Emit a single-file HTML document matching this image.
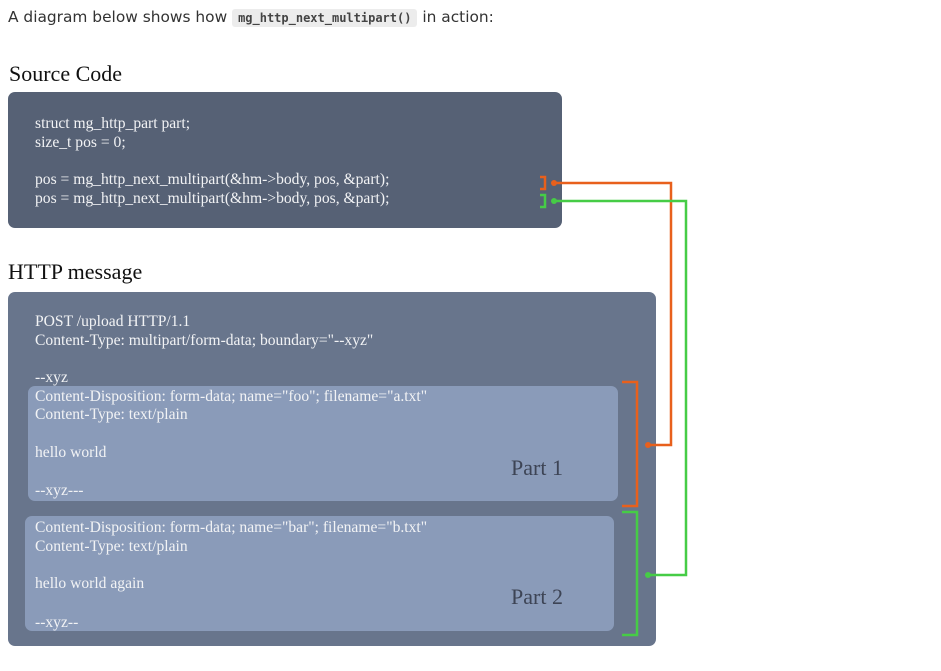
<!DOCTYPE html>
<html><head><meta charset="utf-8"><style>
body{margin:0;width:941px;height:671px;background:#fff;position:relative;overflow:hidden}
.a{position:absolute;white-space:pre}
.s{font-family:"Liberation Serif",serif;font-size:15.6px;line-height:19px;color:#f2f3f5}
.h{font-family:"Liberation Serif",serif;font-size:22px;color:#111}
.box{position:absolute;border-radius:7px}
</style></head><body>
<div class="a" style="left:8px;top:7px;font-family:'DejaVu Sans','Liberation Sans',sans-serif;font-size:15.4px;color:#333;line-height:20px">A diagram below shows how <span style="font-family:'DejaVu Sans Mono','Liberation Mono',monospace;font-weight:bold;font-size:12px;background:#ececec;padding:2px 6px;border-radius:3px;color:#444">mg_http_next_multipart()</span> in action:</div>
<div class="a h" style="left:9px;top:61px">Source Code</div>
<div class="box" style="left:8px;top:92px;width:554px;height:136px;background:#566175"></div>
<div class="a s" style="left:35px;top:114px">struct mg_http_part part;</div>
<div class="a s" style="left:35px;top:133px">size_t pos = 0;</div>
<div class="a s" style="left:35px;top:170px">pos = mg_http_next_multipart(&amp;hm-&gt;body, pos, &amp;part);</div>
<div class="a s" style="left:35px;top:189px">pos = mg_http_next_multipart(&amp;hm-&gt;body, pos, &amp;part);</div>
<div class="a h" style="left:8px;top:259px">HTTP message</div>
<div class="box" style="left:8px;top:292px;width:648px;height:354px;background:#68758c"></div>
<div class="box" style="left:28px;top:386px;width:590px;height:115px;background:#8a9bb9"></div>
<div class="box" style="left:25px;top:516px;width:589px;height:115px;background:#8a9bb9"></div>
<div class="a s" style="left:35px;top:312px">POST /upload HTTP/1.1</div>
<div class="a s" style="left:35px;top:331px">Content-Type: multipart/form-data; boundary="--xyz"</div>
<div class="a s" style="left:35px;top:368px">--xyz</div>
<div class="a s" style="left:35px;top:387px">Content-Disposition: form-data; name="foo"; filename="a.txt"</div>
<div class="a s" style="left:35px;top:405px">Content-Type: text/plain</div>
<div class="a s" style="left:35px;top:443px">hello world</div>
<div class="a s" style="left:35px;top:481px">--xyz---</div>
<div class="a s" style="left:35px;top:518px">Content-Disposition: form-data; name="bar"; filename="b.txt"</div>
<div class="a s" style="left:35px;top:537px">Content-Type: text/plain</div>
<div class="a s" style="left:35px;top:574px">hello world again</div>
<div class="a s" style="left:35px;top:613px">--xyz--</div>
<div class="a" style="left:511px;top:455px;font-family:'Liberation Serif',serif;font-size:22px;color:#3d4455">Part 1</div>
<div class="a" style="left:511px;top:584px;font-family:'Liberation Serif',serif;font-size:22px;color:#3d4455">Part 2</div>
<svg width="941" height="671" style="position:absolute;left:0;top:0" fill="none" stroke-width="2.5">
<g stroke="#e8601c">
<path d="M540 177H545V189H540"/>
<path d="M554 183H671V445H648"/>
<path d="M622 382H637V506H622"/>
</g>
<circle cx="554" cy="183" r="3" fill="#e8601c"/>
<circle cx="648" cy="445" r="3" fill="#e8601c"/>
<g stroke="#46cc46">
<path d="M540 195H545V207H540"/>
<path d="M554 201H686V575H648"/>
<path d="M622 512H637V635H622"/>
</g>
<circle cx="554" cy="201" r="3" fill="#46cc46"/>
<circle cx="648" cy="575" r="3" fill="#46cc46"/>
</svg>
</body></html>
